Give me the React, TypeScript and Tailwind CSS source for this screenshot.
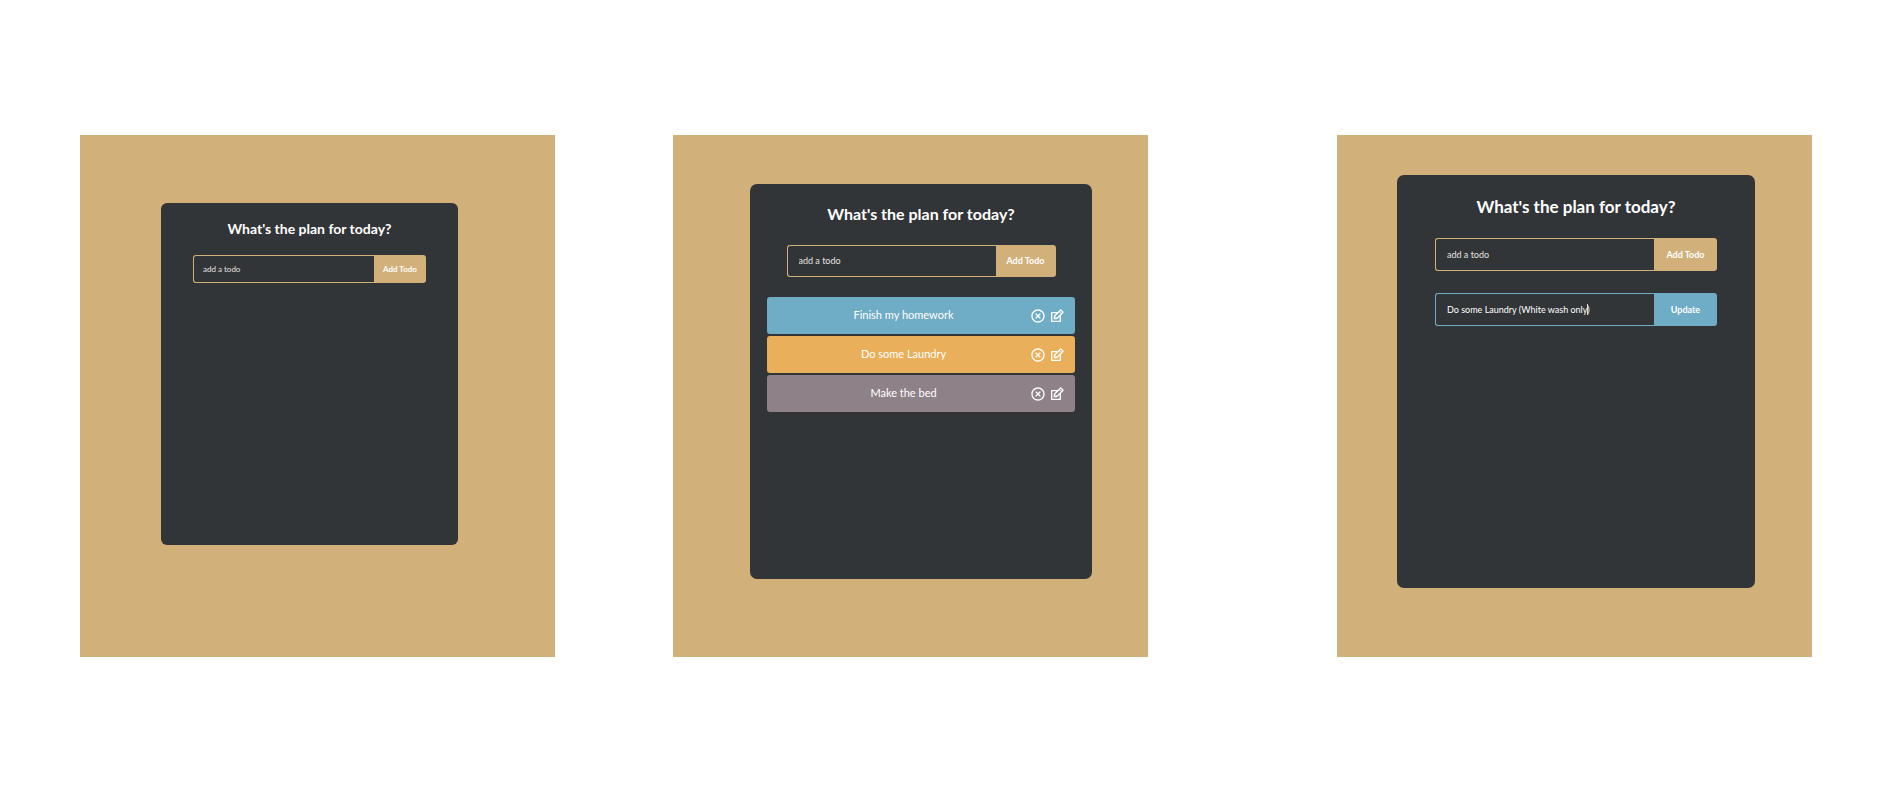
import { useState } from "react";
import type { ReactNode } from "react";
import { RiCloseCircleLine } from "react-icons/ri";
import { TiEdit } from "react-icons/ti";

type FieldProps = {
  label: string;
  placeholder?: string;
  initial?: string;
  action: string;
  formClass: string;
  inputClass: string;
  buttonClass: string;
  children?: ReactNode;
};

function TodoField({ label, placeholder, initial = "", action, formClass, inputClass, buttonClass, children }: FieldProps) {
  const [value, setValue] = useState(initial);
  return (
    <form className={`relative mx-auto flex ${formClass}`} onSubmit={(e) => e.preventDefault()}>
      <input
        aria-label={label}
        placeholder={placeholder}
        value={value}
        onChange={(e) => setValue(e.target.value)}
        className={`min-w-0 flex-1 rounded-l-[3px] border border-r-0 bg-transparent text-white outline-none placeholder:text-[#e2e2e2] ${inputClass}`}
      />
      <button type="submit" className={`shrink-0 rounded-r-[3px] text-center font-bold text-white ${buttonClass}`}>
        {action}
      </button>
      {children}
    </form>
  );
}

const todos = [
  { text: "Finish my homework", color: "bg-[#6facc5]" },
  { text: "Do some Laundry", color: "bg-[#e9af5a]" },
  { text: "Make the bed", color: "bg-[#8f8188]" },
];

export default function App() {
  return (
    <main className="flex min-h-screen items-start bg-white pt-[135px] font-['Lato','Trebuchet_MS',sans-serif] text-white">
      <section className="ml-20 min-h-[522px] w-1/4 shrink-0 bg-[#d1b079] pt-[68px] pl-[81px]">
        <div className="min-h-[342px] w-[297px] rounded-md bg-[#323538] pt-4">
          <h1 className="text-center text-[14px] leading-5 font-bold">What's the plan for today?</h1>
          <TodoField
            label="New todo"
            placeholder="add a todo"
            action="Add Todo"
            formClass="mt-4 h-7 w-[233px]"
            inputClass="border-[#d1b079] pl-[9px] text-[8px]"
            buttonClass="w-[52px] bg-[#d1b079] text-[8px]"
          />
        </div>
      </section>

      <section className="ml-[118px] min-h-[522px] w-1/4 shrink-0 bg-[#d1b079] pt-[49px] pl-[77px]">
        <div className="min-h-[395px] w-[342px] rounded-[7px] bg-[#323538] pt-5">
          <h1 className="text-center text-[16px] leading-5 font-bold">What's the plan for today?</h1>
          <TodoField
            label="New todo"
            placeholder="add a todo"
            action="Add Todo"
            formClass="mt-[21px] h-8 w-[269px]"
            inputClass="border-[#d1b079] pl-[11px] text-[9px]"
            buttonClass="w-[60px] bg-[#d1b079] text-[9px]"
          />
          <ul className="mx-[17px] mt-5 flex flex-col gap-0.5">
            {todos.map((todo) => (
              <li key={todo.text} className={`flex h-[37px] items-center rounded-[3px] px-[10px] ${todo.color}`}>
                <span className="flex-1 text-center text-[11px]">{todo.text}</span>
                <div className="flex items-center gap-[3px]">
                  <button type="button" aria-label={`Remove ${todo.text}`}>
                    <RiCloseCircleLine className="size-4" />
                  </button>
                  <button type="button" aria-label={`Edit ${todo.text}`}>
                    <TiEdit className="size-4" />
                  </button>
                </div>
              </li>
            ))}
          </ul>
        </div>
      </section>

      <section className="ml-[189px] min-h-[522px] w-1/4 shrink-0 bg-[#d1b079] pt-10 pl-[60px]">
        <div className="min-h-[413px] w-[358px] rounded-[7px] bg-[#323538] pt-[22px]">
          <h1 className="text-center text-[17px] leading-5 font-bold">What's the plan for today?</h1>
          <TodoField
            label="New todo"
            placeholder="add a todo"
            action="Add Todo"
            formClass="mt-[21px] h-[33px] w-[282px]"
            inputClass="border-[#d1b079] pl-[11px] text-[9px]"
            buttonClass="w-[63px] bg-[#d1b079] text-[9px]"
          />
          <TodoField
            label="Update todo"
            initial="Do some Laundry (White wash only)"
            action="Update"
            formClass="mt-[22px] h-[33px] w-[282px]"
            inputClass="border-[#6facc5] pl-[11px] text-[9px]"
            buttonClass="w-[63px] bg-[#6facc5] text-[9px]"
          >
            <span aria-hidden="true" className="absolute top-[11px] left-[152px] h-[11px] w-px bg-white/80" />
          </TodoField>
        </div>
      </section>
    </main>
  );
}
